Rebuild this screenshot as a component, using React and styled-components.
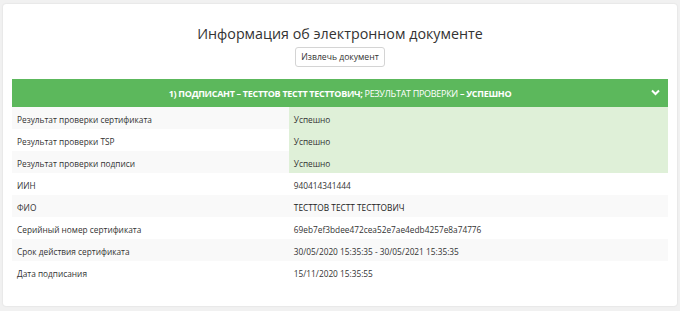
import React from "react";
import styled, { createGlobalStyle } from "styled-components";

const GlobalStyles = createGlobalStyle`
  html, body {
    margin: 0;
    padding: 0;
    background: #f1f1f1;
    font-family: "Open Sans", "Liberation Sans", sans-serif;
    color: #333;
  }
`;

const Page = styled.div`
  padding: 4px 3px 5px 3px;
`;

const Panel = styled.div`
  background: #fff;
  border-radius: 3px;
  box-shadow: 0 0 2px rgba(0, 0, 0, 0.12);
  padding: 21px 9px 23px 9px;
  height: 302px;
  box-sizing: border-box;
`;

const Title = styled.h2`
  margin: 0;
  text-align: center;
  font-size: 14.3px;
  font-weight: 400;
  line-height: 17px;
  color: #333;
`;

const Actions = styled.div`
  display: flex;
  justify-content: center;
  margin-top: 5px;
`;

const ExtractButton = styled.button`
  font-family: "Open Sans", sans-serif;
  font-size: 8.6px;
  color: #333;
  background: #fff;
  border: 1px solid #d4d4d4;
  border-radius: 3px;
  height: 20px;
  width: 90px;
  padding: 0;
  cursor: pointer;
`;

const SignerHeader = styled.div`
  margin-top: 12px;
  height: 28px;
  background: #5cb85c;
  color: #fff;
  display: flex;
  align-items: center;
  justify-content: center;
  position: relative;
  font-size: 9px;
  letter-spacing: -0.3px;
  text-transform: uppercase;
`;

const HeaderPart = styled.span`
  font-weight: ${(p) => (p.$bold ? 700 : 400)};
  white-space: pre;
`;

const Chevron = styled.svg`
  position: absolute;
  right: 8px;
  top: 10px;
`;

const Table = styled.table`
  width: 100%;
  border-collapse: collapse;
  font-size: 8.3px;
  table-layout: fixed;
`;

const Row = styled.tr`
  background: ${(p) => (p.$striped ? "#f9f9f9" : "#fff")};
  & + & td {
    border-top: 1px solid #e4e4e4;
  }
`;

const Cell = styled.td`
  height: 22px;
  box-sizing: border-box;
  padding: 3px 0 0 5px;
  vertical-align: middle;
  background: ${(p) => (p.$success ? "#dff0d8" : "transparent")};
  color: ${(p) => (p.$strong ? "#222" : "#333")};
  white-space: nowrap;
`;

const rows = [
  { label: "Результат проверки сертификата", value: "Успешно", success: true },
  { label: "Результат проверки TSP", value: "Успешно", success: true },
  { label: "Результат проверки подписи", value: "Успешно", success: true },
  { label: "ИИН", value: "940414341444" },
  { label: "ФИО", value: "ТЕСТТОВ ТЕСТТ ТЕСТТОВИЧ", strong: true },
  { label: "Серийный номер сертификата", value: "69eb7ef3bdee472cea52e7ae4edb4257e8a74776" },
  { label: "Срок действия сертификата", value: "30/05/2020 15:35:35 - 30/05/2021 15:35:35" },
  { label: "Дата подписания", value: "15/11/2020 15:35:55" },
];

const App = () => {
  return (
    <Page>
      <GlobalStyles />
      <Panel>
        <Title>Информация об электронном документе</Title>
        <Actions>
          <ExtractButton>Извлечь документ</ExtractButton>
        </Actions>
        <SignerHeader>
          <HeaderPart $bold>1) Подписант – ТЕСТТОВ ТЕСТТ ТЕСТТОВИЧ; </HeaderPart>
          <HeaderPart>Результат проверки </HeaderPart>
          <HeaderPart $bold>– Успешно</HeaderPart>
          <Chevron width="9" height="7" viewBox="0 0 9 7">
            <polyline
              points="1,1.5 4.5,5 8,1.5"
              fill="none"
              stroke="#fff"
              strokeWidth="2"
            />
          </Chevron>
        </SignerHeader>
        <Table>
          <colgroup>
            <col style={{ width: "42.2%" }} />
            <col />
          </colgroup>
          <tbody>
            {rows.map((r, i) => (
              <Row key={r.label} $striped={i % 2 === 0}>
                <Cell>{r.label}</Cell>
                <Cell $success={r.success} $strong={r.strong}>
                  {r.value}
                </Cell>
              </Row>
            ))}
          </tbody>
        </Table>
      </Panel>
    </Page>
  );
};

export default App;
